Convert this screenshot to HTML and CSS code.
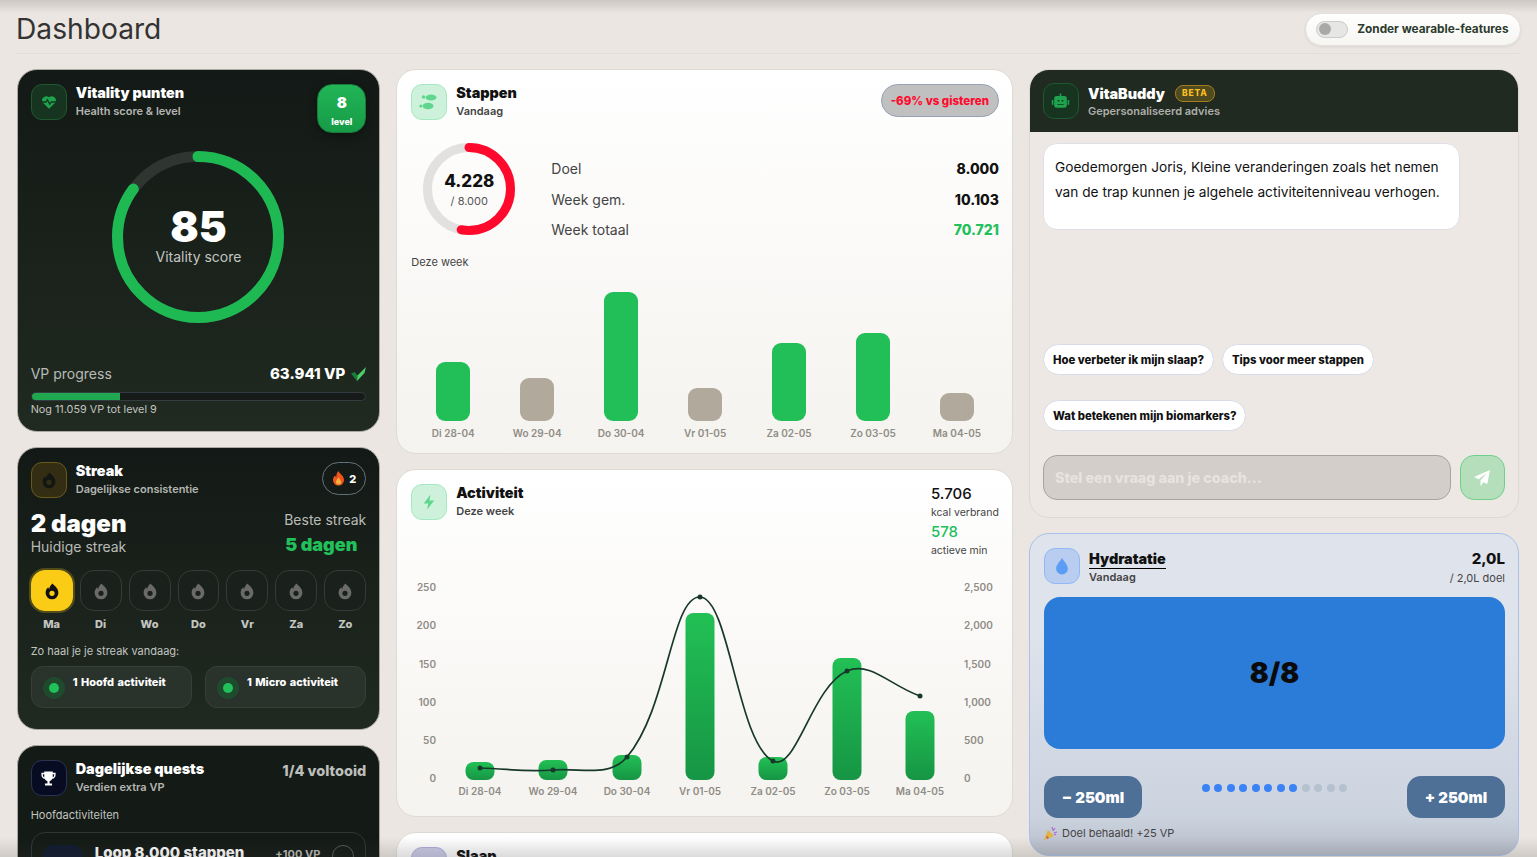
FILE: index.html
```html
<!DOCTYPE html>
<html lang="nl">
  <head>
    <meta charset="UTF-8" />
    <meta name="viewport" content="width=device-width, initial-scale=1.0" />
    <title>Dashboard</title>
    <link rel="stylesheet" href="styles.css">
  </head>
  <body>
    <svg class="icon-defs" aria-hidden="true">
      <symbol id="flame" viewBox="0 0 24 24">
        <path fill-rule="evenodd" d="M13 2c.6 2.600 7.500 5 7.500 12.500a8.500 8.500 0 0 1-17 0C3.500 11 5 8.500 7 7c.2 1.200.6 2 1.300 2.400C8.500 6.500 10.500 3.500 13 2zM12 11.500a3.500 3.500 0 1 0 0 7 3.500 3.500 0 0 0 0-7z" fill="currentColor" />
      </symbol>
    </svg>

    <div class="shade-top"></div>
    <div class="shade-bottom"></div>

    <header class="topbar">
      <h1>Dashboard</h1>
      <div class="wearable">
        <span class="toggle"><span class="knob"></span></span>
        <span>Zonder wearable-features</span>
      </div>
    </header>

    <main class="grid">
      <div class="col">
        <section class="card dark vitality">
          <div class="card-head">
            <div class="badge-icon icon-green">
              <svg width="18" height="18" viewBox="0 0 24 24"><path d="M12 21 3.500 12.500A5.500 5.500 0 0 1 12 5.800a5.500 5.500 0 0 1 8.500 6.700z" fill="#1fa34e" /><path d="M2 12h6l2-3 3 6 2-3h7" fill="none" stroke="#143a20" stroke-width="1.800" /></svg>
            </div>
            <div class="head-text">
              <h2>Vitality punten</h2>
              <p>Health score &amp; level</p>
            </div>
            <div class="level"><b>8</b><span>level</span></div>
          </div>
          <div class="gauge">
            <svg width="172" height="172" viewBox="0 0 172 172">
              <circle cx="86" cy="86" r="80.500" fill="none" stroke="#2f3530" stroke-width="11" />
              <circle cx="86" cy="86" r="80.500" fill="none" stroke="#1fb954" stroke-width="11" stroke-linecap="round" stroke-dasharray="430 506" transform="rotate(-90 86 86)" />
            </svg>
            <div class="gauge-text">
              <b>85</b>
              <span>Vitality score</span>
            </div>
          </div>
          <div class="vp-row">
            <span>VP progress</span>
            <span class="vp-val">63.941 VP
              <svg width="15" height="14" viewBox="0 0 15 14"><path d="M0 6.500 3.500 5 6.500 8.500 6 14z" fill="#15803d" /><path d="M6 14 6.500 8.500 15 0 13.500 6z" fill="#4ad066" /></svg>
            </span>
          </div>
          <div class="vp-bar"><div class="vp-fill"></div></div>
          <p class="vp-note">Nog 11.059 VP tot level 9</p>
        </section>

        <section class="card dark streak">
          <div class="card-head">
            <div class="badge-icon icon-amber">
              <svg width="18" height="18"><use href="#flame" /></svg>
            </div>
            <div class="head-text">
              <h2>Streak</h2>
              <p>Dagelijkse consistentie</p>
            </div>
            <div class="streak-pill">
              <svg width="13" height="15" viewBox="0 0 13 15"><path d="M6.500 0c.5 2.500 5.500 4.500 5.500 9a5.500 5.500 0 0 1-11 0c0-2 1-3.500 2.300-4.500.2 1 .5 1.600 1 2C4 4 5 1.500 6.500 0z" fill="#f0561f" /><path d="M6.500 6.500C7 8 9 9 9 11a2.500 2.500 0 0 1-5 0c0-2 2-3 2.500-4.500z" fill="#fcb03c" /></svg>
              <b>2</b>
            </div>
          </div>
          <div class="streak-stats">
            <div>
              <div class="streak-now">2 dagen</div>
              <div class="streak-label">Huidige streak</div>
            </div>
            <div>
              <div class="streak-label">Beste streak</div>
              <div class="streak-best">5 dagen</div>
            </div>
          </div>
          <div class="days">
            <div class="day active"><div class="day-box"><svg width="18" height="18"><use href="#flame" /></svg></div><span>Ma</span></div>
            <div class="day"><div class="day-box"><svg width="18" height="18"><use href="#flame" /></svg></div><span>Di</span></div>
            <div class="day"><div class="day-box"><svg width="18" height="18"><use href="#flame" /></svg></div><span>Wo</span></div>
            <div class="day"><div class="day-box"><svg width="18" height="18"><use href="#flame" /></svg></div><span>Do</span></div>
            <div class="day"><div class="day-box"><svg width="18" height="18"><use href="#flame" /></svg></div><span>Vr</span></div>
            <div class="day"><div class="day-box"><svg width="18" height="18"><use href="#flame" /></svg></div><span>Za</span></div>
            <div class="day"><div class="day-box"><svg width="18" height="18"><use href="#flame" /></svg></div><span>Zo</span></div>
          </div>
          <p class="how">Zo haal je je streak vandaag:</p>
          <div class="tasks">
            <div class="task"><span class="task-dot"><i></i></span><b>1 Hoofd activiteit</b></div>
            <div class="task"><span class="task-dot"><i></i></span><b>1 Micro activiteit</b></div>
          </div>
        </section>

        <section class="card dark quests">
          <div class="card-head">
            <div class="badge-icon icon-navy">
              <svg width="17" height="17" viewBox="0 0 24 24"><path d="M6 2h12v2h4v3c0 3-2 5-4.600 5.400A6 6 0 0 1 13.500 15.800V19H17v3H7v-3h3.500v-3.200A6 6 0 0 1 6.600 12.400C4 12 2 10 2 7V4h4zm0 4H4v1c0 1.600.8 2.800 2 3.300zm12 0v4.300c1.200-.5 2-1.700 2-3.300V6z" fill="#fff" fill-rule="evenodd" /></svg>
            </div>
            <div class="head-text">
              <h2>Dagelijkse quests</h2>
              <p>Verdien extra VP</p>
            </div>
            <div class="quest-count">1/4 voltooid</div>
          </div>
          <p class="how quest-sub">Hoofdactiviteiten</p>
          <div class="quest-row">
            <div class="quest-icon"></div>
            <b class="quest-name">Loop 8.000 stappen</b>
            <span class="quest-vp">+100 VP</span>
            <span class="quest-check"></span>
          </div>
        </section>
      </div>

      <div class="col">
        <section class="card light steps">
          <div class="card-head">
            <div class="badge-icon icon-mint">
              <svg width="20" height="18" viewBox="0 0 20 18"><ellipse cx="12" cy="4.500" rx="5.500" ry="3" fill="#5fd68d" /><circle cx="4.500" cy="4" r="1.700" fill="#5fd68d" /><ellipse cx="9" cy="13" rx="5.500" ry="3.200" fill="#5fd68d" /><circle cx="1.800" cy="13" r="1.600" fill="#5fd68d" /></svg>
            </div>
            <div class="head-text">
              <h2>Stappen</h2>
              <p>Vandaag</p>
            </div>
            <div class="delta">-69% vs gisteren</div>
          </div>
          <div class="steps-main">
            <div class="ring">
              <svg width="92" height="92" viewBox="0 0 92 92">
                <circle cx="46" cy="46" r="41.500" fill="none" stroke="#e2e1df" stroke-width="9" />
                <circle cx="46" cy="46" r="41.500" fill="none" stroke="#ff0a2d" stroke-width="9" stroke-linecap="round" stroke-dasharray="138 261" transform="rotate(-90 46 46)" />
              </svg>
              <div class="ring-text"><b>4.228</b><span>/ 8.000</span></div>
            </div>
            <dl class="stats">
              <div><dt>Doel</dt><dd>8.000</dd></div>
              <div><dt>Week gem.</dt><dd>10.103</dd></div>
              <div><dt>Week totaal</dt><dd class="green">70.721</dd></div>
            </dl>
          </div>
          <p class="week-label">Deze week</p>
          <div class="bars">
            <div class="bar-col"><div class="bar hit" style="height: 59px"></div><span>Di 28-04</span></div>
            <div class="bar-col"><div class="bar" style="height: 43px"></div><span>Wo 29-04</span></div>
            <div class="bar-col"><div class="bar hit" style="height: 129px"></div><span>Do 30-04</span></div>
            <div class="bar-col"><div class="bar" style="height: 33px"></div><span>Vr 01-05</span></div>
            <div class="bar-col"><div class="bar hit" style="height: 78px"></div><span>Za 02-05</span></div>
            <div class="bar-col"><div class="bar hit" style="height: 88px"></div><span>Zo 03-05</span></div>
            <div class="bar-col"><div class="bar" style="height: 28px"></div><span>Ma 04-05</span></div>
          </div>
        </section>

        <section class="card light activity">
          <div class="card-head">
            <div class="badge-icon icon-mint">
              <svg width="18" height="18" viewBox="0 0 24 24"><path d="M14 2 5 14h6l-1.500 8L19 10h-6.500z" fill="#5fd68d" /></svg>
            </div>
            <div class="head-text">
              <h2>Activiteit</h2>
              <p>Deze week</p>
            </div>
            <div class="act-stats">
              <b>5.706</b>
              <span>kcal verbrand</span>
              <b class="green">578</b>
              <span>actieve min</span>
            </div>
          </div>
          <svg class="act-chart" width="588" height="224" viewBox="411 578 588 224">
            <defs>
              <linearGradient id="barfill" x1="0" y1="0" x2="0" y2="1">
                <stop offset="0" stop-color="#22c055" />
                <stop offset="1" stop-color="#169544" />
              </linearGradient>
            </defs>
            <g class="axis">
              <text x="436" y="591" text-anchor="end">250</text>
              <text x="436" y="629" text-anchor="end">200</text>
              <text x="436" y="668" text-anchor="end">150</text>
              <text x="436" y="706" text-anchor="end">100</text>
              <text x="436" y="744" text-anchor="end">50</text>
              <text x="436" y="782" text-anchor="end">0</text>
              <text x="964" y="591">2,500</text>
              <text x="964" y="629">2,000</text>
              <text x="964" y="668">1,500</text>
              <text x="964" y="706">1,000</text>
              <text x="964" y="744">500</text>
              <text x="964" y="782">0</text>
              <text x="480" y="795" text-anchor="middle">Di 28-04</text>
              <text x="553" y="795" text-anchor="middle">Wo 29-04</text>
              <text x="627" y="795" text-anchor="middle">Do 30-04</text>
              <text x="700" y="795" text-anchor="middle">Vr 01-05</text>
              <text x="773" y="795" text-anchor="middle">Za 02-05</text>
              <text x="847" y="795" text-anchor="middle">Zo 03-05</text>
              <text x="920" y="795" text-anchor="middle">Ma 04-05</text>
            </g>
            <g fill="url(#barfill)">
              <rect x="465.500" y="762" width="29" height="18" rx="8" />
              <rect x="538.500" y="760" width="29" height="20" rx="8" />
              <rect x="612.500" y="755" width="29" height="25" rx="8" />
              <rect x="685.500" y="613" width="29" height="167" rx="8" />
              <rect x="758.500" y="757" width="29" height="23" rx="8" />
              <rect x="832.500" y="658" width="29" height="122" rx="8" />
              <rect x="905.500" y="711" width="29" height="69" rx="8" />
            </g>
            <path d="M480 768C509.200 768.800 524 772.200 553 770C582.800 767.800 609.400 777.800 627 757C668.200 708.600 671.100 596.200 700 597C729.500 597.800 737.300 743 773 761C796.100 772.600 811.600 686.700 847 671C870.400 660.700 890.800 686 920 696" fill="none" stroke="#17382a" stroke-width="1.700" />
            <g fill="#17382a">
              <circle cx="480" cy="768" r="2.500" />
              <circle cx="553" cy="770" r="2.500" />
              <circle cx="627" cy="757" r="2.500" />
              <circle cx="700" cy="597" r="2.500" />
              <circle cx="773" cy="761" r="2.500" />
              <circle cx="847" cy="671" r="2.500" />
              <circle cx="920" cy="696" r="2.500" />
            </g>
          </svg>
        </section>

        <section class="card light sleep">
          <div class="card-head">
            <div class="badge-icon icon-lilac"></div>
            <div class="head-text">
              <h2>Slaap</h2>
            </div>
          </div>
        </section>
      </div>

      <div class="col">
        <section class="card buddy">
          <div class="buddy-head">
            <div class="badge-icon icon-green">
              <svg width="19" height="19" viewBox="0 0 24 24"><path d="M11 2h2v3h4a3 3 0 0 1 3 3v9a3 3 0 0 1-3 3H7a3 3 0 0 1-3-3V8a3 3 0 0 1 3-3h4zM1 10h2v6H1zm20 0h2v6h-2z" fill="#1fa34e" /><path d="M8.500 10h2v2h-2zm5 0h2v2h-2zM8 15h8v1H8z" fill="#12351f" /></svg>
            </div>
            <div class="head-text">
              <h2>VitaBuddy <span class="beta">BETA</span></h2>
              <p>Gepersonaliseerd advies</p>
            </div>
          </div>
          <div class="buddy-body">
            <div class="bubble">Goedemorgen Joris, Kleine veranderingen zoals het nemen van de trap kunnen je algehele activiteitenniveau verhogen.</div>
            <div class="chips">
              <span class="chip">Hoe verbeter ik mijn slaap?</span>
              <span class="chip">Tips voor meer stappen</span>
              <span class="chip">Wat betekenen mijn biomarkers?</span>
            </div>
            <div class="ask">
              <div class="ask-input">Stel een vraag aan je coach...</div>
              <div class="ask-send">
                <svg width="16" height="16" viewBox="0 0 16 16"><path d="M16 0 0 7l4.500 2.200L13 3 6.500 10.300V16l3-3.800 3.800 1.800z" fill="#fff" /></svg>
              </div>
            </div>
          </div>
        </section>

        <section class="card hydra">
          <div class="card-head">
            <div class="badge-icon icon-blue">
              <svg width="16" height="18" viewBox="0 0 16 20"><path d="M8 1c2 3.500 6.500 7.500 6.500 12a6.500 6.500 0 0 1-13 0C1.500 8.500 6 4.500 8 1z" fill="#5b9cf5" /></svg>
            </div>
            <div class="head-text">
              <h2 class="underlined">Hydratatie</h2>
              <p>Vandaag</p>
            </div>
            <div class="hydra-total"><b>2,0L</b><span>/ 2,0L doel</span></div>
          </div>
          <div class="glass">8/8</div>
          <div class="hydra-controls">
            <div class="hydra-btn">&minus; 250ml</div>
            <div class="dots">
              <i class="on"></i><i class="on"></i><i class="on"></i><i class="on"></i>
              <i class="on"></i><i class="on"></i><i class="on"></i><i class="on"></i>
              <i></i><i></i><i></i><i></i>
            </div>
            <div class="hydra-btn">+ 250ml</div>
          </div>
          <p class="goal">
            <svg width="14" height="14" viewBox="0 0 14 14"><path d="M0 14 4 4l6 6z" fill="#e3b341" /><path d="M2 9l3 3-2 1z" fill="#c0604a" /><path d="M8 1l1 3M11 2 9 5M13 6l-3 1M12 9l-2-1" stroke="#b06ad0" stroke-width="1.200" /></svg>
            Doel behaald! +25 VP
          </p>
        </section>
      </div>
    </main>
  </body>
</html>
```

FILE: styles.css
```css
* {
  box-sizing: border-box;
}

html,
body {
  height: 100%;
  overflow: hidden;
}

body {
  margin: 0;
  background-color: #ebe6e1;
  font-family: Inter, "Liberation Sans", Arial, sans-serif;
  color: #111;
}

h1,
h2,
p,
dl,
dd {
  margin: 0;
}

.icon-defs {
  width: 0;
  height: 0;
  position: absolute;
}

.shade-top,
.shade-bottom {
  position: fixed;
  left: 0;
  right: 0;
  pointer-events: none;
  z-index: 5;
}

.shade-top {
  top: 0;
  height: 13px;
  background: linear-gradient(rgba(60, 60, 60, 0.18), rgba(60, 60, 60, 0));
}

.shade-bottom {
  bottom: 0;
  height: 20px;
  background: linear-gradient(rgba(60, 60, 60, 0), rgba(60, 60, 60, 0.16));
}

/* top bar */
.topbar {
  display: flex;
  align-items: center;
  justify-content: space-between;
  height: 54px;
  margin: 0 16.5px 0 16px;
  padding-top: 5px;
  border-bottom: 1px solid #dde0e2;
}

.topbar h1 {
  font-size: 28.2px;
  font-weight: 400;
  color: #333;
}

.wearable {
  display: flex;
  align-items: center;
  gap: 9px;
  height: 33px;
  padding: 0 11px 0 10px;
  border: 1px solid #e2e0dc;
  border-radius: 17px;
  background: linear-gradient(#fff, #f6f5f2);
  box-shadow: 0 1px 3px rgba(0, 0, 0, 0.08);
  font-size: 11.8px;
  font-weight: 700;
  color: #2b3b2d;
}

.toggle {
  display: flex;
  align-items: center;
  width: 32px;
  height: 17px;
  padding-left: 2px;
  border: 1px solid #c9ccc8;
  border-radius: 9px;
  background-color: #e6e7e4;
}

.knob {
  width: 12px;
  height: 12px;
  border-radius: 50%;
  background-color: #a9a9a9;
}

/* page grid */
.grid {
  display: grid;
  grid-template-columns: 363.6px 616.7px 490px;
  gap: 16px;
  padding: 15px 0 0 16.7px;
}

.col {
  display: flex;
  flex-direction: column;
  gap: 15px;
}

.card {
  flex: none;
  border-radius: 20px;
  padding: 14px 13px;
}

.dark {
  border: 1px solid #a9a8a2;
  background: linear-gradient(#131916, #202a20);
  color: #fff;
}

.light {
  border: 1px solid #dedbd6;
  background: linear-gradient(#fff, #f5f3ef);
  padding-left: 14px;
}

.card-head {
  display: flex;
  align-items: flex-start;
  gap: 9px;
}

.badge-icon {
  flex: none;
  display: flex;
  align-items: center;
  justify-content: center;
  width: 36px;
  height: 36px;
  border: 1px solid;
  border-radius: 11px;
}

.icon-green {
  background-color: #16341f;
  border-color: #1e5a30;
}

.icon-amber {
  background-color: #332e13;
  border-color: #6a5a1a;
  color: #131613;
}

.icon-navy {
  background-color: #070c22;
  border-color: #2a3350;
}

.icon-mint {
  background-color: #cef1db;
  border-color: #a6e8bf;
}

.icon-lilac {
  background-color: #c9c9e6;
  border-color: #aeaede;
}

.icon-blue {
  background-color: #b9cdf0;
  border-color: #93b8f5;
}

.head-text {
  flex: 1;
}

.head-text h2 {
  font-size: 14.4px;
  font-weight: 900;
  line-height: 18px;
}

.head-text p {
  margin-top: 2px;
  font-size: 11px;
  font-weight: 600;
  line-height: 14px;
  color: #b4b6b2;
}

.light .head-text p,
.hydra .head-text p {
  color: #444;
}

/* vitality */
.vitality {
  height: 363px;
}

.level {
  display: flex;
  flex-direction: column;
  align-items: center;
  justify-content: center;
  gap: 6px;
  width: 49px;
  height: 49px;
  padding-top: 4px;
  border: 1px solid #197a3c;
  border-radius: 15px;
  background: linear-gradient(#22b557, #169b46);
  box-shadow: 0 3px 8px rgba(0, 0, 0, 0.35);
}

.level b {
  font-size: 15px;
  font-weight: 900;
  line-height: 16px;
}

.level span {
  font-size: 9px;
  font-weight: 800;
  line-height: 10px;
}

.gauge {
  position: relative;
  width: 172px;
  height: 172px;
  margin: 18px auto 0;
}

.gauge-text {
  position: absolute;
  inset: 0;
  display: flex;
  flex-direction: column;
  align-items: center;
  justify-content: center;
  padding-bottom: 4px;
}

.gauge-text b {
  font-size: 42px;
  font-weight: 900;
  line-height: 44px;
}

.gauge-text span {
  font-size: 14px;
  color: #c4c6c2;
  line-height: 16px;
}

.vp-row {
  display: flex;
  justify-content: space-between;
  align-items: center;
  margin-top: 42px;
  font-size: 14px;
  line-height: 18px;
  color: #b9bbb7;
}

.vp-val {
  display: flex;
  align-items: center;
  gap: 6px;
  font-size: 15px;
  font-weight: 800;
  color: #fff;
}

.vp-bar {
  height: 9px;
  margin-top: 9px;
  border: 1px solid #333c40;
  border-radius: 5px;
  background-color: #161b1a;
  overflow: hidden;
}

.vp-fill {
  width: 26.5%;
  height: 100%;
  background-color: #1fa84f;
}

.vp-note {
  margin-top: 2px;
  font-size: 10.8px;
  line-height: 14px;
  color: #c2c4c0;
}

/* streak */
.streak {
  height: 283px;
}

.streak-pill {
  display: flex;
  align-items: center;
  justify-content: center;
  gap: 4px;
  width: 44px;
  height: 33px;
  border: 1px solid #66717f;
  border-radius: 17px;
  font-size: 11px;
}

.streak-pill b {
  font-weight: 800;
}

.streak-stats {
  display: flex;
  justify-content: space-between;
  margin-top: 12px;
}

.streak-now {
  font-size: 24px;
  font-weight: 900;
  line-height: 28px;
}

.streak-label {
  font-size: 14px;
  line-height: 18px;
  color: #b9bbb7;
}

.streak-stats > div:last-child {
  padding-top: 1px;
}

.streak-best {
  margin: 5px 0 0 1px;
  font-size: 18px;
  font-weight: 900;
  line-height: 22px;
  color: #22c05a;
}

.days {
  display: flex;
  gap: 7px;
  margin-top: 14px;
}

.day {
  flex: 1;
  display: flex;
  flex-direction: column;
  align-items: center;
  gap: 6px;
  font-size: 11px;
  font-weight: 800;
  line-height: 14px;
  color: #c3c5c1;
}

.day-box {
  display: flex;
  align-items: center;
  justify-content: center;
  width: 100%;
  height: 41px;
  border: 1px solid #343b38;
  border-radius: 14px;
  background-color: #1a201c;
  color: #6a6a68;
}

.active .day-box {
  border-color: #facc15;
  background-color: #facc15;
  color: #111;
  box-shadow: 0 0 0 2px rgba(250, 204, 21, 0.25);
}

.how {
  margin-top: 13px;
  font-size: 11px;
  line-height: 14px;
  color: #c2c4c0;
}

.tasks {
  display: grid;
  grid-template-columns: 1fr 1fr;
  gap: 13px;
  margin-top: 8px;
}

.task {
  display: flex;
  align-items: flex-start;
  gap: 8px;
  height: 42px;
  padding: 8px 11px;
  border: 1px solid #363f38;
  border-radius: 12px;
  background-color: #29322b;
  font-size: 11px;
  line-height: 14px;
  word-spacing: 1px;
}

.task b {
  font-weight: 800;
}

.task-dot {
  flex: none;
  display: flex;
  align-items: center;
  justify-content: center;
  width: 22px;
  height: 22px;
  margin-top: 2px;
  border-radius: 50%;
  background-color: #1f4a2d;
}

.task-dot i {
  width: 10px;
  height: 10px;
  border-radius: 50%;
  background-color: #22c05a;
}

/* quests */
.quests {
  height: 200px;
  background: #141a16;
}

.quest-count {
  font-size: 14.5px;
  font-weight: 800;
  line-height: 22px;
  color: #bcbeba;
}

.quest-sub {
  margin-top: 12px;
}

.quest-row {
  display: flex;
  align-items: flex-start;
  height: 60px;
  margin-top: 10px;
  padding: 12px 11px;
  border: 1px solid #2f3836;
  border-radius: 14px;
}

.quest-icon {
  flex: none;
  width: 40px;
  height: 36px;
  border-radius: 11px;
  background-color: #101a30;
}

.quest-name {
  flex: 1;
  margin-left: 12px;
  font-size: 15px;
  font-weight: 800;
  line-height: 16px;
}

.quest-vp {
  margin-top: 2px;
  font-size: 11px;
  font-weight: 700;
  color: #b9bbb7;
}

.quest-check {
  flex: none;
  width: 22px;
  height: 22px;
  margin-left: 12px;
  border: 1px solid #555c58;
  border-radius: 50%;
}

/* stappen */
.steps {
  height: 384.5px;
}

.delta {
  display: flex;
  align-items: center;
  height: 33px;
  padding: 0 9px;
  border: 1.5px solid #95a2b5;
  border-radius: 17px;
  background-color: #c0c0c0;
  font-size: 11.5px;
  font-weight: 800;
  color: #ff0a2d;
}

.green {
  color: #22c05a;
}

.steps-main {
  display: flex;
  align-items: flex-start;
  margin-top: 23px;
}

.ring {
  position: relative;
  width: 92px;
  height: 92px;
  margin-left: 12px;
}

.ring-text {
  position: absolute;
  inset: 0;
  display: flex;
  flex-direction: column;
  align-items: center;
  justify-content: center;
}

.ring-text b {
  font-size: 17px;
  font-weight: 800;
  line-height: 22px;
}

.ring-text span {
  margin-top: 2px;
  font-size: 11px;
  line-height: 14px;
  color: #555;
}

.stats {
  flex: 1;
  margin: 11px 0 0 36px;
}

.stats div {
  display: flex;
  justify-content: space-between;
  font-size: 14px;
  line-height: 30.500px;
}

.stats dt {
  color: #444;
}

.stats dd {
  font-weight: 800;
}

.week-label {
  margin-top: 9.500px;
  font-size: 11px;
  line-height: 14px;
  color: #444;
}

.bars {
  display: flex;
  align-items: flex-end;
  height: 156px;
  margin-top: 15px;
}

.bar-col {
  flex: 1;
  display: flex;
  flex-direction: column;
  align-items: center;
  gap: 6px;
  font-size: 10px;
  font-weight: 600;
  line-height: 13px;
  color: #8f8c86;
}

.bar {
  width: 34px;
  border-radius: 9px;
  background-color: #b1a99c;
}

.bar.hit {
  background-color: #22bf58;
}

/* activiteit */
.activity {
  height: 348.5px;
}

.act-stats {
  display: flex;
  flex-direction: column;
  width: 68px;
  font-size: 10.5px;
  line-height: 19.3px;
  color: #444;
}

.act-stats b {
  font-size: 15px;
  font-weight: 500;
  color: #111;
}

.act-stats b.green {
  color: #22c05a;
}

.act-chart {
  display: block;
  margin-top: 17px;
}

.axis text {
  font-family: Inter, "Liberation Sans", Arial, sans-serif;
  font-size: 10px;
  font-weight: 600;
  fill: #8f8c86;
}

.sleep {
  height: 120px;
  background: linear-gradient(#fff, #e9e9e9);
}

/* vitabuddy */
.buddy {
  display: flex;
  flex-direction: column;
  height: 449px;
  padding: 0;
  border: 1px solid #dcd8d2;
  background-color: #ede8e3;
  overflow: hidden;
}

.buddy-head {
  display: flex;
  align-items: center;
  gap: 9px;
  height: 62px;
  padding: 0 13px;
  background-color: #212a20;
  color: #fff;
}

.buddy-head .head-text h2 {
  display: flex;
  align-items: center;
  gap: 10px;
  font-size: 14.4px;
}

.buddy-head .head-text p {
  margin-top: 1px;
  color: #adaeab;
}

.beta {
  padding: 2px 6px;
  border: 1px solid #a67c1c;
  border-radius: 8px;
  background-color: rgba(250, 190, 30, 0.22);
  font-size: 8.500px;
  font-weight: 800;
  letter-spacing: 0.8px;
  line-height: 11px;
  color: #fbbf24;
}

.buddy-body {
  flex: 1;
  display: flex;
  flex-direction: column;
  padding: 11px 13px 17px;
}

.bubble {
  width: 417px;
  height: 87px;
  padding: 11px 11px;
  border: 1px solid #dde0e8;
  border-radius: 14px;
  background-color: #fff;
  font-size: 13.7px;
  line-height: 25px;
  color: #111;
}

.chips {
  display: flex;
  flex-wrap: wrap;
  gap: 25px 8px;
  margin-top: auto;
}

.chip {
  display: flex;
  align-items: center;
  height: 31px;
  padding: 0 9px;
  border: 1px solid #d8dce8;
  border-radius: 16px;
  background-color: #fff;
  font-size: 11.3px;
  font-weight: 800;
}

.ask {
  display: flex;
  gap: 9px;
  margin-top: 24px;
}

.ask-input {
  flex: 1;
  display: flex;
  align-items: center;
  height: 45px;
  padding: 0 11px;
  border: 1.5px solid #a8a39d;
  border-radius: 14px;
  background-color: #d3cec9;
  font-size: 14.3px;
  font-weight: 800;
  color: #e7e3de;
}

.ask-send {
  display: flex;
  align-items: center;
  justify-content: center;
  width: 45px;
  height: 45px;
  border: 1.5px solid #6fcf8f;
  border-radius: 14px;
  background-color: #b5dfba;
}

/* hydratatie */
.hydra {
  height: 322.5px;
  padding-left: 14px;
  border: 1px solid #a9c1e8;
  background: linear-gradient(#dfe3ec 30%, #cbd3df 88%, #b7bdc9);
}

.hydra .head-text h2.underlined {
  display: inline-block;
  margin-top: -1px;
  border-bottom: 1px solid #000;
}

.hydra .head-text p {
  margin-top: 1px;
}

.hydra-total {
  display: flex;
  flex-direction: column;
  align-items: flex-end;
}

.hydra-total b {
  font-size: 15px;
  font-weight: 800;
  line-height: 22px;
}

.hydra-total span {
  margin-top: 1px;
  font-size: 11px;
  line-height: 14px;
  color: #444;
}

.glass {
  display: flex;
  align-items: center;
  justify-content: center;
  height: 152px;
  margin-top: 12px;
  border-radius: 16px;
  background-color: #2b7cd9;
  font-size: 28px;
  font-weight: 900;
  color: #0b0b0b;
}

.hydra-controls {
  display: flex;
  justify-content: space-between;
  align-items: flex-start;
  margin-top: 27px;
}

.hydra-btn {
  display: flex;
  align-items: center;
  justify-content: center;
  width: 98px;
  height: 42px;
  border-radius: 14px;
  background-color: #4e6f96;
  font-size: 15px;
  font-weight: 900;
  color: #fff;
}

.dots {
  display: flex;
  gap: 4.500px;
  margin-top: 8px;
}

.dots i {
  width: 8px;
  height: 8px;
  border-radius: 50%;
  background-color: #b6c1d0;
}

.dots i.on {
  background-color: #3b82f6;
}

.goal {
  display: flex;
  align-items: center;
  gap: 4px;
  margin-top: 8px;
  font-size: 11px;
  line-height: 14px;
  color: #444;
}
```
